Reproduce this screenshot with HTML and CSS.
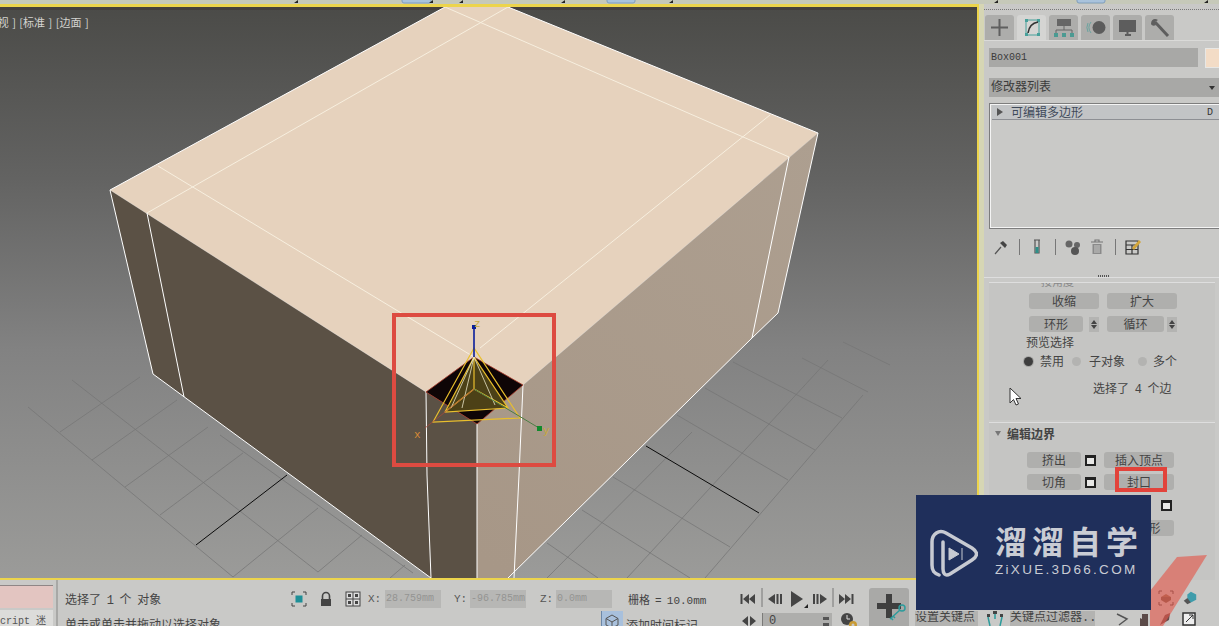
FILE: index.html
```html
<!DOCTYPE html>
<html lang="zh">
<head>
<meta charset="utf-8">
<title>3ds Max</title>
<link rel="stylesheet" href="styles.css">
</head>
<body>
<div class="app">
  <svg class="topstrip" viewBox="0 0 1219 4" aria-hidden="true">
    <rect x="402" y="-3" width="29" height="6" rx="2" fill="#a9c3dc" stroke="#7f9dbc"/>
    <rect x="607" y="-3" width="28" height="6" rx="2" fill="#a9c3dc" stroke="#7f9dbc"/>
    <rect x="1077" y="-3" width="28" height="6" rx="2" fill="#a9c3dc" stroke="#7f9dbc"/>
    <path d="M294 3h4v-3zM429 3h4v-3zM459 3h4v-3zM561 3h4v-3zM669 3h4v-3zM994 3h4v-3zM1204 3h4v-3z" fill="#222"/>
  </svg>
  <main class="main">
    <div class="viewport">
      <svg class="scene" viewBox="0 7 977 571" aria-label="视口">
        <defs>
          <linearGradient id="bg" x1="0" y1="7" x2="0" y2="578" gradientUnits="userSpaceOnUse">
            <stop offset="0" stop-color="#4b4b48"/>
            <stop offset=".3" stop-color="#636362"/>
            <stop offset=".6" stop-color="#828282"/>
            <stop offset="1" stop-color="#9b9b99"/>
          </linearGradient>
          <linearGradient id="rw" x1="818" y1="133" x2="510" y2="578" gradientUnits="userSpaceOnUse">
            <stop offset="0" stop-color="#ad9f90"/>
            <stop offset="1" stop-color="#a79787"/>
          </linearGradient>
        </defs>
        <rect x="0" y="7" width="977" height="571" fill="url(#bg)"/>
        <rect x="0" y="7" width="977" height="3" fill="#45403e"/>
        <g class="grid">
          <path d="M28 407 233 577M72 380 318 572M220 435 413 573M60 432 140 377M92 460 177 400M125 487 208 427M160 515 243 453M233 577 318 508M318 572 362 535M390 578 405 565"/>
          <path d="M677 415 788 480M705 388 815 450M733 362 842 418M802 358 868 392M843 342 890 365M613 477 730 547M582 510 690 578M547 543 598 578M705 578 863 395M627 578 828 360M547 578 692 432"/>
        </g>
        <path class="black-line" d="M196 545 287 475M646 446 759 513"/>
        <polygon points="110,190 426,392 477,424 477,578 431,578 153,374" fill="#5b5145"/>
        <polygon points="523,385 818,133 778,313 752,338 508,578 477,578 477,424" fill="url(#rw)"/>
        <polygon points="110,190 445,7 508,7 818,133 523,385 474,357 426,392" fill="#e6d2bd"/>
        <g class="edge">
          <path d="M110 190 153 374 431 578M147 213 184 397M445 7 110 190M508 7 818 133 778 313 752 338 508 578M789 157 752 338"/>
          <path d="M426 392 427 475 431 578M477 424 477 578M523 385 519 475 514 578"/>
          <path d="M110 190 426 392M818 133 523 385" opacity=".3"/>
        </g>
        <path class="inner" d="M147 213 508 7M158 166 474 357M445 7 789 157M770 115 480 348"/>
        <polygon points="474,357 426,392 477,424 523,385" fill="#0e0506" stroke="#b2402f" stroke-width=".8"/>
        <polygon points="474,357 445,412 508,408" fill="#4c4117"/>
        <g class="gizmo">
          <path d="M474 348 433 422 520 418ZM474 357 445,412 508,408ZM445 412 474 389 508 408M474 357V389"/>
        </g>
        <path d="M474 357 451 408M474 357 462 408M474 357 495 405" stroke="#e9e4c8" stroke-width=".8" fill="none"/>
        <path d="M474 357V327" stroke="#0a1d9c" stroke-width="1.6"/>
        <rect x="472" y="325" width="4" height="4" fill="#0a1d9c"/>
        <path d="M474 389 539 428" stroke="#4b7d45" stroke-width="1"/>
        <rect x="537" y="426" width="5" height="5" fill="#118a2c"/>
        <path d="M474 389 425 428" stroke="#a5483a" stroke-width=".8"/>
        <text class="axis" x="474" y="327">z</text>
        <text class="axis" x="543" y="434">y</text>
        <text class="axis axis-x" x="414" y="438">x</text>
        <rect class="redbox" x="394" y="315" width="160" height="150"/>
        <text class="vp-label" x="-17" y="27">[透视 ] [标准 ] [边面 ]</text>
      </svg>
    </div>
    <aside class="panel">
      <div class="dotted"></div>
      <div class="tabs">
        <div class="tab"><svg viewBox="0 0 29 25"><path d="M14.5 4v17M6 12.500h17" stroke="#5f5f5f" stroke-width="2"/></svg></div>
        <div class="tab tab-on"><svg viewBox="0 0 29 25"><path d="M9 5h13v15H9z" fill="none" stroke="#47a09a"/><path d="M8 4h3v3H8zM20 4h3v3h-3zM8 18h3v3H8zM20 18h3v3h-3z" fill="#47a09a"/><path d="M11 18C12 11 15 8 21 7" fill="none" stroke="#333" stroke-width="1.600"/></svg></div>
        <div class="tab"><svg viewBox="0 0 29 25"><rect x="8" y="4" width="14" height="7" fill="#666"/><path d="M15 11v4M7 19v-4h16v4" fill="none" stroke="#666"/><path d="M5 18h4v4H5zM13 18h4v4h-4zM21 18h4v4h-4z" fill="#4b9a92"/></svg></div>
        <div class="tab"><svg viewBox="0 0 29 25"><circle cx="18" cy="12.500" r="6.500" fill="#5c5c5c"/><path d="M10 7a9 9 0 0 0 0 11M7 8a10 10 0 0 0 0 9" fill="none" stroke="#6aa39f"/></svg></div>
        <div class="tab"><svg viewBox="0 0 29 25"><rect x="6" y="5" width="17" height="12" fill="#5d5d5d"/><path d="M12 20h6M14.500 17v3" stroke="#5d5d5d" stroke-width="2"/></svg></div>
        <div class="tab"><svg viewBox="0 0 29 25"><path d="M10 7 23 21" stroke="#5e5e5e" stroke-width="3" fill="none"/><path d="M6 9C6 4 10 3 13 5L10 7 11 10C9 11 7 11 6 9Z" fill="#5e5e5e"/></svg></div>
      </div>
      <div class="name-row">
        <div class="field name-field">Box001</div>
        <div class="swatch"></div>
      </div>
      <div class="field drop-field"><span class="drop-text">修改器列表</span><span class="drop-arrow"></span></div>
      <div class="stack">
        <div class="stack-row">
          <span class="tri-right"></span>
          <span class="stack-name">可编辑多边形</span>
          <span class="bulb">D</span>
        </div>
      </div>
      <div class="tools">
        <svg class="tool t-pin" viewBox="0 0 18 18"><path d="M3 16 9 9" stroke="#555" stroke-width="1.200"/><path d="M8 5 13 10 15 7 11 3Z" fill="#444"/></svg>
        <span class="tool-sep s1"></span>
        <svg class="tool t-tube" viewBox="0 0 18 18"><path d="M6 2h6M7 2v13h4V2" fill="none" stroke="#555" stroke-width="1.200"/><rect x="7.500" y="9" width="3" height="6" fill="#2f8f88"/></svg>
        <span class="tool-sep s2"></span>
        <svg class="tool t-dots" viewBox="0 0 18 18"><circle cx="5" cy="6" r="3.500" fill="#666"/><circle cx="13" cy="7" r="3" fill="#666"/><circle cx="11" cy="13" r="4" fill="#555"/></svg>
        <svg class="tool t-bin" viewBox="0 0 18 18"><path d="M3 4h12M7 4V2h4v2" fill="none" stroke="#777" stroke-width="1.200"/><path d="M4.500 6h9v10h-9z" fill="#8a8a8a"/><path d="M7 7v8M9 7v8M11 7v8" stroke="#c8c8c6"/></svg>
        <span class="tool-sep s3"></span>
        <svg class="tool t-cfg" viewBox="0 0 18 18"><path d="M2 3h12v13H2zM2 7h12M2 11.500h12M8 7v9" fill="none" stroke="#333" stroke-width="1.200"/><path d="M8 10 15 2l2 2-7 8Z" fill="#d2a53a"/></svg>
      </div>
      <div class="sash"><span class="sash-grip"></span></div>
      <section class="rollout roll-a">
        <div class="clip-row"><span>按角度</span></div>
        <div class="row row-1a">
          <button class="btn w70">收缩</button>
          <button class="btn w70">扩大</button>
        </div>
        <div class="row row-1b">
          <button class="btn w54">环形</button><span class="spin"></span>
          <button class="btn w57">循环</button><span class="spin spin-b"></span>
        </div>
        <div class="plain preview">预览选择</div>
        <div class="radios">
          <span class="radio radio-on"></span><span class="r1">禁用</span>
          <span class="radio"></span><span class="r2">子对象</span>
          <span class="radio"></span><span class="r3">多个</span>
        </div>
        <div class="plain count">选择了 4 个边</div>
      </section>
      <section class="rollout roll-b">
        <header class="roll-head"><span class="tri-down"></span><strong>编辑边界</strong><span class="grip"></span></header>
        <div class="row row-2">
          <button class="btn w54">挤出</button><span class="winbox"></span>
          <button class="btn w70">插入顶点</button>
        </div>
        <div class="row row-3">
          <button class="btn w54">切角</button><span class="winbox"></span>
          <button class="btn w70">封口</button>
        </div>
        <div class="row row-4">
          <button class="btn w54">桥</button><span class="winbox winbox-far"></span>
        </div>
        <div class="row row-5">
          <button class="btn w146">利用所选内容创建图形</button>
        </div>
      </section>
    </aside>
  </main>
  <footer class="bottom">
    <div class="listener">
      <div class="pink"></div>
      <div class="script">cript 迷</div>
    </div>
    <div class="status">
      <div class="sb-row first">
        <span class="msg">选择了 1 个 对象</span>
        <svg class="ico i-sel" viewBox="0 0 16 16"><path d="M1 4V1h3M12 1h3v3M15 12v3h-3M4 15H1v-3" fill="none" stroke="#444"/><rect x="4.500" y="4.500" width="7" height="7" fill="#1d8f97"/></svg>
        <svg class="ico i-lock" viewBox="0 0 16 16"><path d="M4.500 8V5a3.500 3.500 0 0 1 7 0v3" fill="none" stroke="#444" stroke-width="1.600"/><rect x="3" y="8" width="10" height="7" fill="#444"/></svg>
        <svg class="ico i-abs" viewBox="0 0 16 16"><rect x="1" y="1" width="14" height="14" fill="#ddd" stroke="#444"/><path d="M8 1v14M1 8h14" stroke="#444"/><path d="M3 3h3v3H3zM10 10h3v3h-3zM10 3h3v3h-3zM3 10h3v3H3z" fill="#444"/></svg>
        <span class="coord-l lx">X:</span><span class="coord cx">28.759mm</span>
        <span class="coord-l ly">Y:</span><span class="coord cy">-96.785mm</span>
        <span class="coord-l lz">Z:</span><span class="coord cz">0.0mm</span>
        <span class="grid-size">栅格 = 10.0mm</span>
        <svg class="play" viewBox="0 0 114 16"><path d="M1.500 3v10" stroke="#444" stroke-width="2"/><path d="M9 3 3 8 9 13ZM15 3 9 8 15 13Z" fill="#444"/><path d="M22 -3v19" stroke="#777"/><path d="M35 3 28 8 35 13Z" fill="#444"/><path d="M37.500 3v10M41 3v10" stroke="#444" stroke-width="2"/><path d="M51 0 63 8 51 16Z" fill="#444"/><path d="M64 17h4v-4z" fill="#222"/><path d="M74 3v10M77.500 3v10" stroke="#444" stroke-width="2"/><path d="M80 3 87 8 80 13Z" fill="#444"/><path d="M93 -3v19" stroke="#777"/><path d="M99 3 105 8 99 13ZM105 3 111 8 105 13Z" fill="#444"/><path d="M112.500 3v10" stroke="#444" stroke-width="2"/></svg>
      </div>
      <div class="sb-row second">
        <span class="msg msg2">单击或单击并拖动以选择对象</span>
        <span class="cube"><svg viewBox="0 0 20 20"><path d="M10 4 16 7.500V14L10 17 4 14V7.500ZM4 7.500 10 11 16 7.500M10 11V17" fill="none" stroke="#555"/></svg></span>
        <span class="addmark">添加时间标记</span>
        <svg class="arrows" viewBox="0 0 14 10"><path d="M6 0 0 5 6 10ZM8 0 14 5 8 10Z" fill="#444"/></svg>
        <span class="frame"><span>0</span><span class="frame-spin"></span></span>
        <svg class="clock" viewBox="0 0 18 18"><circle cx="7" cy="7" r="6" fill="#444"/><path d="M7 3v4h3" stroke="#ddd" fill="none"/><circle cx="13" cy="13" r="4" fill="#c99b35"/><circle cx="13" cy="13" r="1.500" fill="#c8c8c6"/></svg>
      </div>
    </div>
    <div class="keybtn"><svg viewBox="0 0 40 38"><path d="M20 6v24M8 18h24" stroke="#3f3f3f" stroke-width="6"/><circle cx="33" cy="20" r="3" fill="none" stroke="#2d9c9c" stroke-width="1.500"/><path d="M31 22 21 31M24 28l2 2M22 30l2 2" stroke="#2d9c9c" stroke-width="1.500"/></svg></div>
    <div class="keys">
      <span class="keylabel k1">设置关键点</span>
      <svg class="fork" viewBox="0 0 20 16"><path d="M5 15 3 6M15 15 17 6M10 8V3" stroke="#2d9c9c" stroke-width="1.500" fill="none"/><path d="M2 3h3v3H2zM15 3h3v3h-3zM8 0h4v3H8z" fill="#444"/></svg>
      <span class="keylabel k2">关键点过滤器...</span>
      <svg class="nav n1" viewBox="0 0 14 14"><path d="M2 2 12 7 4 13" fill="none" stroke="#555" stroke-width="1.500"/></svg>
      <svg class="nav n2" viewBox="0 0 14 14"><path d="M3 14V6l2 1V2h6v12Z" fill="#5b4a48"/></svg>
      <svg class="nav n3" viewBox="0 0 14 14"><path d="M2 13 7 3 12 1 11 8Z" fill="#6b4b4a"/></svg>
      <svg class="nav n4" viewBox="0 0 14 14"><rect x="1" y="1" width="12" height="12" fill="#eee" stroke="#333" stroke-width="1.500"/><path d="M4 10 11 3M7 3h4v4" fill="none" stroke="#333"/></svg>
    </div>
    <div class="navtop">
      <svg class="navt" viewBox="0 0 16 16"><path d="M1 4V1h3M12 1h3v3M1 12v3h3M12 15h3v-3" fill="none" stroke="#444"/><path d="M8 4 13 7 8 10 3 7Z" fill="#8c6f56"/><path d="M3 7v3l5 3 5-3V7" fill="#6e5c4b"/></svg>
      <svg class="navt" viewBox="0 0 18 16"><path d="M10 1 16 4V10L10 13 6 11V4Z" fill="#3f9cab"/><path d="M2 11 6 8 10 13 6 15Z" fill="#555"/></svg>
    </div>
  </footer>
  <svg class="seven" viewBox="0 0 70 72" aria-hidden="true"><polygon points="27,2 57,0 13,71 0,71 0,36" fill="#e4574a"/></svg>
  <div class="capbox"></div>
  <svg class="cursor" viewBox="0 0 13 20" aria-hidden="true"><path d="M1 1V16L4.500 12.500 7 18 9.500 17 7 11.500H12Z" fill="#fff" stroke="#333"/></svg>
  <div class="mark">
    <svg class="mark-logo" viewBox="0 0 48 50"><path d="M9 46C4 44 2 42 2 36V13C2 5 9 0 16 4L42 19C48 23 48 27 42 31L20 45C15 48 13 44 13 40V13" fill="none" stroke="#c7cad2" stroke-width="3.500" stroke-linecap="round" stroke-linejoin="round"/><path d="M19 19 29 25 19 31ZM32 19v12" fill="#c7cad2" stroke="#c7cad2"/></svg>
    <div class="mark-text">
      <div class="mark-cn">溜溜自学</div>
      <div class="mark-en">ZiXUE.3D66.COM</div>
    </div>
  </div>
</div>
</body>
</html>
```

FILE: styles.css
```css
* { box-sizing: border-box; }
html, body { margin: 0; padding: 0; height: 626px; overflow: hidden; background: #c9c9c7; }
body { font-family: "Liberation Mono", "Noto Sans CJK SC", monospace; font-size: 12px; color: #444; }

.app { position: relative; width: 1219px; height: 626px; overflow: hidden; display: flex; flex-direction: column; }
.topstrip { display: block; width: 1219px; height: 4px; background: #c6c9b9; flex: none; }
.main { display: flex; height: 576px; flex: none; }

.viewport { width: 979px; height: 576px; border-top: 3px solid #ecd44c; border-right: 2px solid #ecd44c; border-bottom: 2px solid #ecd44c; flex: none; }
.scene { display: block; width: 977px; height: 571px; }
.grid path { stroke: #757575; stroke-width: 1; fill: none; opacity: .75; }
.black-line { stroke: #0b0b0b; stroke-width: 1; fill: none; }
.edge path { stroke: #fff; stroke-width: 1; fill: none; }
.inner { stroke: #f7efdf; stroke-width: 1; fill: none; }
.gizmo path { stroke: #e9bf2d; stroke-width: 1.200; fill: none; }
.axis { font-size: 11px; fill: #c8a83c; font-family: "Liberation Mono", monospace; }
.axis-x { fill: #d98a35; }
.redbox { fill: none; stroke: #dd4b41; stroke-width: 4; }
.vp-label { font-size: 11px; fill: #d4d4d0; font-family: "Noto Sans CJK SC", sans-serif; word-spacing: 1px; }

.panel { width: 240px; height: 576px; overflow: hidden; border-left: 5px solid #d6d6b4; background: #c9c9c7; flex: none; }
.dotted { margin-top: 5px; height: 1px; border-top: 1px dotted #777; }
.tabs { display: flex; gap: 3px; margin-top: 5px; height: 26px; padding-left: 1px; border-bottom: 1px solid #dadad8; }
.tab { width: 29px; height: 25px; background: #adadab; border-radius: 3px 3px 0 0; }
.tab-on { background: #d5d5d3; }
.tab svg { display: block; width: 29px; height: 25px; }

.name-row { display: flex; margin: 7px 0 0 5px; gap: 7px; height: 20px; }
.field { background: #a8a8a6; height: 19px; line-height: 19px; padding-left: 2px; color: #3b3b3b; }
.name-field { width: 209px; font-size: 10px; flex: none; }
.swatch { width: 20px; height: 20px; background: #f3dcc6; border: 1px solid #e7e7e5; flex: none; }
.drop-field { margin: 10px 0 0 5px; width: 230px; display: flex; justify-content: space-between; align-items: center; }
.drop-text { padding-top: 2px; }
.drop-arrow { width: 0; height: 0; margin-right: 4px; border-left: 3px solid transparent; border-right: 3px solid transparent; border-top: 4px solid #333; }

.stack { margin: 6px 0 0 5px; width: 232px; height: 126px; border: 1px solid #7d7d7d; box-shadow: inset 0 0 0 1px #f4f4f4; padding: 1px 0 0 2px; }
.stack-row { display: flex; align-items: center; height: 15px; border-bottom: 1px solid #8d8f94; background: #c2c4c6; }
.tri-right { width: 0; height: 0; margin-left: 5px; border-top: 4px solid transparent; border-bottom: 4px solid transparent; border-left: 6px solid #555; }
.stack-name { margin-left: 8px; width: 73px; white-space: nowrap; color: #3f4a5a; }
.bulb { margin-left: 123px; font-size: 10px; color: #333; }

.tools { display: flex; align-items: center; margin-top: 9px; height: 18px; padding-left: 8px; }
.tool { width: 18px; height: 18px; flex: none; }
.tool-sep { width: 1px; height: 16px; background: #777; flex: none; }
.s1 { margin-left: 9px; }
.t-tube { margin-left: 8px; }
.s2 { margin-left: 9px; }
.t-dots { margin-left: 8px; }
.t-bin { margin-left: 6px; }
.s3 { margin-left: 9px; }
.t-cfg { margin-left: 8px; }

.sash { margin-top: 19px; height: 3px; border-bottom: 1px solid #dedede; display: flex; justify-content: center; }
.sash-grip { width: 12px; height: 2px; margin-left: 5px; background: repeating-linear-gradient(90deg, #555 0 1px, transparent 1px 2px); }

.rollout { margin-left: 5px; width: 226px; background: #c5c5c3; border-top: 1px solid #dedede; }
.roll-a { margin-top: 4px; height: 138px; }
.roll-b { margin-top: 2px; height: 160px; }
.clip-row { height: 5px; overflow: hidden; padding-left: 52px; line-height: 1px; color: #888; font-size: 11px; }
.row { display: flex; align-items: center; padding-left: 40px; }
.row-1a { margin-top: 5px; gap: 8px; }
.row-1b { margin-top: 7px; }
.btn { display: block; height: 16px; padding: 4px 0 0; border: 0; border-radius: 3px; background: #afafad; font: inherit; line-height: 12px; color: #444; text-align: center; flex: none; white-space: nowrap; overflow: hidden; }
.w70 { width: 70px; }
.w54 { width: 54px; }
.w57 { width: 57px; }
.w146 { width: 147px; }
.spin { position: relative; width: 10px; height: 15px; margin: 0 8px 0 6px; background: #b4b4b2; flex: none; }
.spin-b { margin: 0 0 0 3px; }
.spin::before, .spin::after { content: ""; position: absolute; left: 2px; border-left: 3px solid transparent; border-right: 3px solid transparent; }
.spin::before { top: 3px; border-bottom: 4px solid #444; }
.spin::after { bottom: 3px; border-top: 4px solid #444; }
.plain { white-space: nowrap; word-spacing: -1.500px; }
.preview { margin: 4px 0 0 37px; line-height: 16px; }
.radios { display: flex; align-items: center; margin-top: 1px; height: 16px; padding-left: 35px; }
.radio { width: 9px; height: 9px; border-radius: 50%; background: #b3b3b1; flex: none; }
.radio-on { background: #3e3e3e; box-shadow: 0 0 0 1px #a6a6a4; }
.r1 { margin: 0 0 0 7px; width: 24px; }
.r2 { margin: 0 0 0 8px; width: 36px; }
.radios .r1 + .radio { margin-left: 8px; }
.radios .r2 + .radio { margin-left: 13px; }
.r3 { margin-left: 6px; }
.count { margin: 13px 0 0 104px; line-height: 16px; }

.roll-head { display: flex; align-items: center; height: 20px; padding-left: 6px; }
.tri-down { width: 0; height: 0; border-left: 3px solid transparent; border-right: 3px solid transparent; border-top: 5px solid #777; }
.roll-head strong { margin-left: 6px; font-weight: 700; color: #444; font-family: "Noto Sans CJK SC", sans-serif; }
.grip { margin-left: 141px; width: 6px; height: 6px; background: radial-gradient(#888 40%, transparent 45%) 0 0 / 2px 2px; }
.row-2 { margin-top: 9px; padding-left: 38px; }
.row-3 { margin-top: 6px; padding-left: 38px; }
.row-4 { margin-top: 7px; padding-left: 38px; }
.row-5 { margin-top: 7px; padding-left: 38px; }
.winbox { width: 11px; height: 11px; margin: 0 8px 0 4px; background: #e8e8e6; border: 2px solid #222; border-top-width: 3px; flex: none; }
.winbox-far { margin-left: 80px; }

.bottom { display: flex; height: 46px; flex: none; position: relative; background: #c9c9c7; }
.listener { width: 53px; flex: none; padding-top: 5px; }
.pink { height: 23px; background: #e3c5c1; border-top: 1px solid #8f8686; }
.script { margin-top: 2px; height: 16px; padding-top: 3px; line-height: 18px; font-size: 10px; background: #dcdcda; overflow: hidden; white-space: nowrap; color: #555; }
.status { width: 816px; flex: none; margin-left: 3px; padding-left: 7px; border-left: 2px solid #a8a8a6; }
.sb-row { display: flex; align-items: center; }
.first { height: 21px; margin-top: 8px; }
.second { height: 20px; margin-top: 2px; }
.msg { width: 226px; flex: none; white-space: nowrap; word-spacing: -1.500px; }
.msg2 { line-height: 20px; margin-top: 10px; }
.ico { width: 16px; height: 16px; flex: none; }
.i-lock { margin-left: 11px; }
.i-abs { margin-left: 11px; }
.coord-l { flex: none; font-size: 11px; color: #555; }
.lx { margin-left: 7px; width: 17px; }
.ly { margin-left: 13px; width: 16px; }
.lz { margin-left: 14px; width: 16px; }
.coord { flex: none; height: 18px; line-height: 18px; width: 56px; background: #b7b7b5; color: #949492; font-size: 10px; padding-left: 1px; white-space: nowrap; overflow: hidden; }
.grid-size { margin-left: 16px; width: 100px; flex: none; font-size: 11px; white-space: nowrap; word-spacing: -1.500px; }
.play { width: 114px; height: 16px; margin-left: 12px; flex: none; overflow: visible; }
.cube { margin-left: 310px; width: 22px; height: 20px; background: #a8c0dc; border-left: 1px solid #6d88a8; flex: none; }
.cube svg { display: block; width: 20px; height: 20px; }
.addmark { margin: 8px 0 0 3px; width: 110px; flex: none; white-space: nowrap; }
.arrows { width: 14px; height: 10px; margin-left: 6px; flex: none; }
.frame { display: flex; justify-content: space-between; align-items: center; margin-left: 6px; width: 70px; height: 16px; padding: 0 3px 0 6px; background: #aeaeac; border-left: 1px solid #7b7b79; flex: none; }
.frame-spin { width: 6px; height: 9px; background: linear-gradient(#555 30%, transparent 30% 70%, #555 70%); }
.clock { width: 18px; height: 18px; margin-left: 8px; flex: none; }
.keybtn { width: 40px; height: 38px; margin: 8px 0 0 -3px; background: #a9a9a7; border-radius: 3px 3px 0 0; flex: none; }
.keybtn svg { display: block; width: 40px; height: 38px; }
.keys { display: flex; align-items: center; align-self: flex-end; height: 15px; margin-left: 6px; flex: none; }
.keylabel { background: #b3b3b1; height: 15px; line-height: 15px; flex: none; white-space: nowrap; overflow: hidden; }
.k1 { width: 63px; }
.k2 { width: 85px; }
.fork { width: 20px; height: 16px; margin: 0 5px 0 7px; flex: none; }
.nav { width: 14px; height: 14px; flex: none; }
.n1 { margin-left: 20px; }
.n2 { margin-left: 8px; }
.n3 { margin-left: 7px; }
.n4 { margin-left: 10px; }
.navtop { position: absolute; left: 1158px; top: 10px; display: flex; gap: 8px; }
.navt { width: 16px; height: 16px; flex: none; }

.seven { position: absolute; left: 1150px; top: 555px; width: 70px; height: 72px; opacity: .62; }
.capbox { position: absolute; left: 1115px; top: 467px; width: 52px; height: 25px; border: 4px solid #e2433b; }
.cursor { position: absolute; left: 1009px; top: 387px; width: 13px; height: 20px; }
.mark { position: absolute; left: 916px; top: 495px; width: 235px; height: 115px; background: #1f2f5b; display: flex; align-items: flex-start; padding: 34px 0 0 14px; }
.mark-logo { width: 48px; height: 50px; flex: none; }
.mark-text { margin: -8px 0 0 17px; font-family: "Noto Sans CJK SC", sans-serif; color: #c9ccd4; white-space: nowrap; }
.mark-cn { font-size: 32px; line-height: 38px; font-weight: 700; letter-spacing: 5px; }
.mark-en { font-family: "Liberation Sans", sans-serif; font-size: 13.500px; line-height: 16px; letter-spacing: 2.300px; margin-top: 3px; }
```
